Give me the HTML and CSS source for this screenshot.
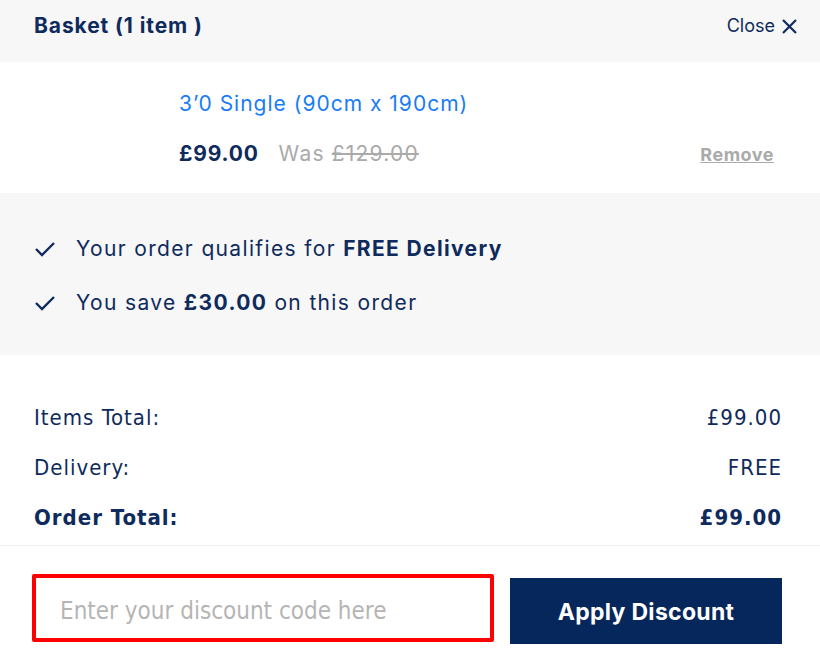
FILE: index.html
```html
<!DOCTYPE html>
<html lang="en">
<head>
    <meta charset="UTF-8">
    <meta name="viewport" content="width=device-width, initial-scale=1.0">
    <title>Basket</title>
    <link rel="stylesheet" href="styles.css">
</head>
<body>

<div class="basket">
    <div class="basket-head">
        <h2 class="basket-title">Basket (1 item )</h2>
        <a class="close" href="#">Close
            <svg width="17" height="17" viewBox="0 0 17 17"><path d="M2 2 L15 15 M15 2 L2 15" stroke="#0f2a5c" stroke-width="2.2" fill="none"/></svg>
        </a>
    </div>

    <div class="item">
        <div class="thumb"></div>
        <div class="item-info">
            <a class="item-name" href="#">3’0 Single (90cm x 190cm)</a>
            <div class="item-price">
                <span class="now">£99.00</span>
                <span class="was">Was <s>£129.00</s></span>
                <a class="remove" href="#">Remove</a>
            </div>
        </div>
    </div>

    <ul class="perks">
        <li>
            <svg width="22" height="16" viewBox="0 0 22 16"><path d="M2 8 L8 14 L20 2" stroke="#0f2a5c" stroke-width="2.4" fill="none"/></svg>
            <span>Your order qualifies for <b>FREE Delivery</b></span>
        </li>
        <li>
            <svg width="22" height="16" viewBox="0 0 22 16"><path d="M2 8 L8 14 L20 2" stroke="#0f2a5c" stroke-width="2.4" fill="none"/></svg>
            <span>You save <b>£30.00</b> on this order</span>
        </li>
    </ul>

    <div class="totals">
        <div class="row"><span>Items Total:</span><span>£99.00</span></div>
        <div class="row"><span>Delivery:</span><span>FREE</span></div>
        <div class="row total"><span>Order Total:</span><span>£99.00</span></div>
    </div>

    <div class="discount">
        <input type="text" class="code" placeholder="Enter your discount code here">
        <button class="apply">Apply Discount</button>
    </div>
</div>

</body>
</html>
```

FILE: styles.css
```css
body{
    margin: 0;
    font-family: Inter, "Noto Sans", sans-serif;
    color: #0f2a5c;
    background: #fff;
}
.basket{
    width: 820px;
}
.basket-head{
    height: 62px;
    box-sizing: border-box;
    padding: 13px 22px 0 34px;
    background: #f7f7f7;
    display: flex;
    justify-content: space-between;
    align-items: flex-start;
}
.basket-title{
    margin: 0;
    font-size: 21px;
    font-weight: 700;
    line-height: 26px;
    letter-spacing: 0.9px;
}
.close{
    display: flex;
    align-items: center;
    gap: 6px;
    color: #0f2a5c;
    text-decoration: none;
    font-size: 18px;
    line-height: 26px;
}
.item{
    height: 131px;
    box-sizing: border-box;
    padding: 29px 46px 0 34px;
    display: flex;
}
.thumb{
    width: 145px;
}
.item-info{
    flex: 1;
}
.item-name{
    display: block;
    color: #1a7cf5;
    text-decoration: none;
    font-size: 21px;
    line-height: 26px;
    letter-spacing: 1px;
}
.item-price{
    display: flex;
    align-items: baseline;
    margin-top: 24px;
    font-size: 21px;
    line-height: 26px;
    letter-spacing: 0.8px;
}
.now{
    font-weight: 700;
    margin-right: 20px;
}
.was{
    color: #aaa;
    letter-spacing: 1.2px;
}
.remove{
    margin-left: auto;
    font-size: 18px;
    font-weight: 700;
    letter-spacing: 0.5px;
    color: #aaa;
}
.perks{
    list-style: none;
    margin: 0;
    padding: 43px 0 0 34px;
    height: 162px;
    box-sizing: border-box;
    background: #f7f7f7;
}
.perks li{
    display: flex;
    align-items: center;
    gap: 20px;
    font-size: 21px;
    line-height: 26px;
    letter-spacing: 1.35px;
    margin-bottom: 28px;
}
.perks b{
    font-weight: 700;
}
.totals{
    height: 191px;
    box-sizing: border-box;
    padding: 50px 38px 0 34px;
    border-bottom: 1px solid #eee;
}
.row{
    display: flex;
    justify-content: space-between;
    font-family: "DejaVu Sans Condensed", "DejaVu Sans", sans-serif;
    font-stretch: condensed;
    font-size: 22px;
    line-height: 26px;
    letter-spacing: 1px;
    margin-bottom: 24px;
}
.row.total{
    font-weight: 700;
}
.discount{
    display: flex;
    gap: 16px;
    padding: 28px 38px 0 32px;
    align-items: flex-start;
}
.code{
    width: 462px;
    height: 68px;
    box-sizing: border-box;
    border: 4px solid #f00;
    border-radius: 2px;
    padding: 6px 24px 0;
    font-family: "DejaVu Sans Condensed", "DejaVu Sans", sans-serif;
    font-size: 24px;
    color: #0f2a5c;
}
.code::placeholder{
    color: #b5b5b5;
}
.apply{
    width: 272px;
    height: 66px;
    margin-top: 4px;
    padding-top: 3px;
    border: 0;
    background: #06275c;
    color: #fff;
    font-family: Inter, "Noto Sans", sans-serif;
    font-size: 23px;
    font-weight: 700;
    letter-spacing: 0.3px;
}
```
